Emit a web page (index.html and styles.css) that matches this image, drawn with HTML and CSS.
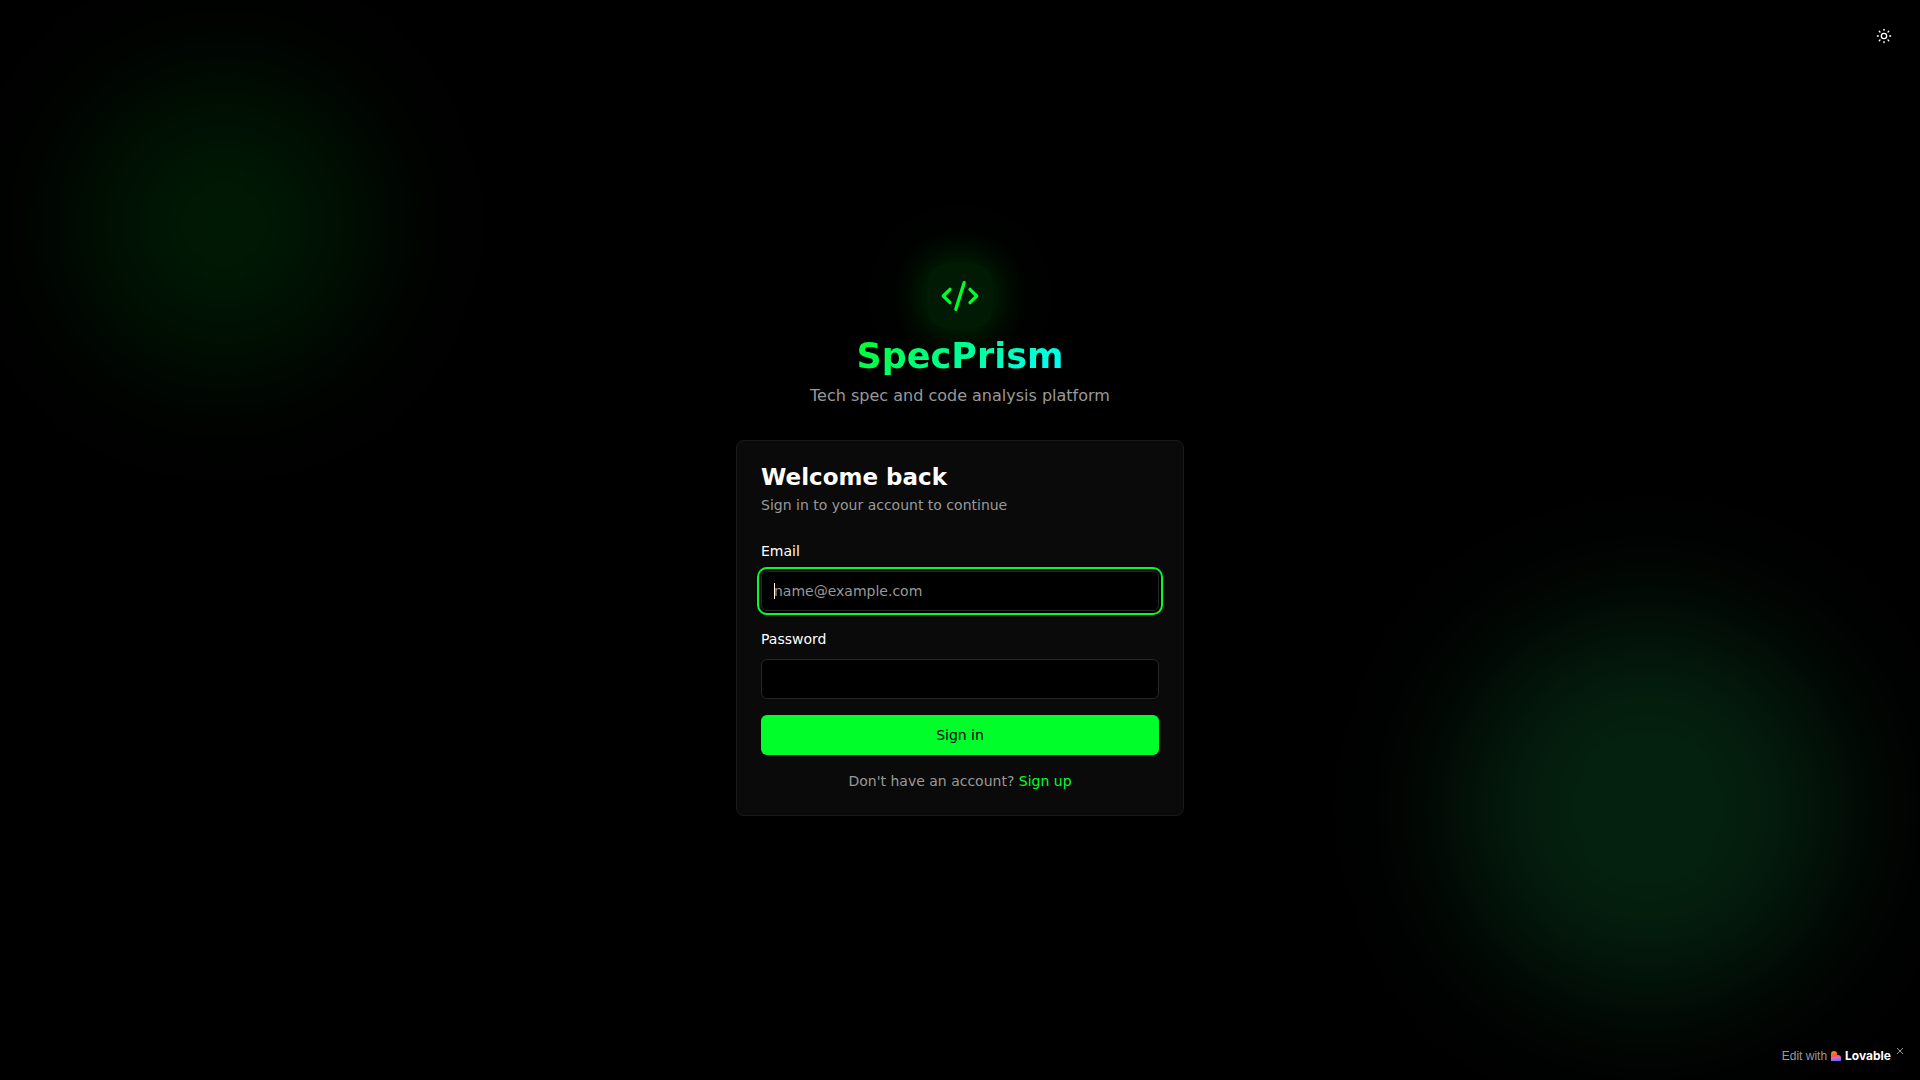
FILE: index.html
```
<!DOCTYPE html>
<html lang="en">
<head>
<meta charset="utf-8">
<meta name="viewport" content="width=device-width, initial-scale=1">
<title>SpecPrism</title>
<link rel="stylesheet" href="styles.css">
</head>
<body>
<div class="glow glow-left"></div>
<div class="glow glow-right"></div>

<button class="theme-toggle" type="button" aria-label="Toggle theme">
  <svg width="16" height="16" viewBox="0 0 24 24" fill="none" stroke="currentColor" stroke-width="2" stroke-linecap="round" stroke-linejoin="round">
    <circle cx="12" cy="12" r="4"/>
    <path d="M12 2v1.500"/>
    <path d="M12 20.500v1.500"/>
    <path d="m4.930 4.930 1 1"/>
    <path d="m18.070 18.070 1 1"/>
    <path d="M2 12h1.500"/>
    <path d="M20.500 12h1.500"/>
    <path d="m5.930 18.070-1 1"/>
    <path d="m19.070 4.930-1 1"/>
  </svg>
</button>

<main class="login">
  <header class="brand">
    <div class="brand-icon">
      <svg width="40" height="40" viewBox="0 0 24 24" fill="none" stroke="currentColor" stroke-width="2" stroke-linecap="round" stroke-linejoin="round">
        <path d="m18 16 4-4-4-4"/>
        <path d="m6 8-4 4 4 4"/>
        <path d="m14.5 4-5 16"/>
      </svg>
    </div>
    <h1>SpecPrism</h1>
    <p>Tech spec and code analysis platform</p>
  </header>

  <section class="card">
    <h2>Welcome back</h2>
    <p class="card-text">Sign in to your account to continue</p>
    <form class="form">
      <div class="field">
        <label for="email">Email</label>
        <div class="input-wrap">
          <input id="email" type="email" placeholder="name@example.com" autofocus>
          <span class="caret"></span>
        </div>
      </div>
      <div class="field">
        <label for="password">Password</label>
        <input id="password" type="password">
      </div>
      <button class="submit" type="submit">Sign in</button>
      <p class="signup">Don't have an account? <a href="#">Sign up</a></p>
    </form>
  </section>
</main>

<div class="badge">
  <a class="badge-link" href="#">
    <span>Edit with</span>
    <svg width="10" height="10" viewBox="0 0 10 10">
      <defs>
        <linearGradient id="heart" x1="0.3" y1="0" x2="0.5" y2="1">
          <stop offset="0.2" stop-color="#ff7a18"/>
          <stop offset="0.45" stop-color="#ff5a3c"/>
          <stop offset="0.7" stop-color="#e661c8"/>
          <stop offset="1" stop-color="#4f73ff"/>
        </linearGradient>
      </defs>
      <path fill="url(#heart)" d="M3 0a3 3 0 0 1 3 3v1h1a3 3 0 0 1 3 3v3H0V3a3 3 0 0 1 3-3z"/>
    </svg>
    <strong>Lovable</strong>
  </a>
  <button class="badge-close" type="button" aria-label="Close">
    <svg width="6" height="6" viewBox="0 0 6 6" stroke="currentColor" stroke-width="1"><path d="M0 0l6 6M6 0L0 6"/></svg>
  </button>
</div>
<script>
  document.getElementById("email").focus();
</script>
</body>
</html>
```
FILE: styles.css
```
* {
  box-sizing: border-box;
}
body {
  margin: 0;
  min-height: 100vh;
  background: #000;
  color: #fff;
  font-family: "DejaVu Sans", sans-serif;
  font-size: 16px;
  line-height: 24px;
  position: relative;
  overflow: hidden;
}
h1, h2, p {
  margin: 0;
}
button {
  font-family: inherit;
  border: 0;
  cursor: pointer;
}

/* blurred background circles */
.glow {
  position: absolute;
  border-radius: 50%;
  filter: blur(64px);
}
.glow-left {
  top: 80px;
  left: 80px;
  width: 288px;
  height: 288px;
  background: rgba(0, 255, 42, 0.1);
}
.glow-right {
  right: 80px;
  bottom: 80px;
  width: 384px;
  height: 384px;
  background: rgba(27, 224, 104, 0.15);
}

.theme-toggle {
  position: absolute;
  top: 16px;
  right: 16px;
  width: 40px;
  height: 40px;
  padding: 0;
  display: flex;
  align-items: center;
  justify-content: center;
  background: none;
  color: #fff;
}

.login {
  position: relative;
  min-height: 100vh;
  width: 100%;
  max-width: 448px;
  margin: 0 auto;
  display: flex;
  flex-direction: column;
  justify-content: center;
  gap: 32px;
}

.brand {
  display: flex;
  flex-direction: column;
  align-items: center;
  gap: 8px;
  text-align: center;
}
.brand-icon {
  padding: 12px;
  height: 64px;
  border-radius: 16px;
  color: #00ff2a;
  background: rgba(0, 255, 42, 0.1);
  box-shadow: 0 0 40px rgba(0, 255, 42, 0.2), 0 0 80px rgba(0, 255, 42, 0.1);
}
.brand h1 {
  font-size: 35px;
  line-height: 40px;
  font-weight: 700;
  color: transparent;
  background: linear-gradient(135deg, #00ff2a, #00ffff);
  background-clip: text;
  -webkit-background-clip: text;
}
.brand p {
  color: #999;
}

.card {
  padding: 24px;
  border: 1px solid #1a1a1a;
  border-radius: 8px;
  background: #0a0a0a;
}
.card h2 {
  font-size: 23px;
  line-height: 24px;
  font-weight: 700;
}
.card-text {
  margin-top: 6px;
  font-size: 14px;
  line-height: 20px;
  color: #999;
}

.form {
  margin-top: 24px;
  display: flex;
  flex-direction: column;
  gap: 16px;
}
.field {
  display: flex;
  flex-direction: column;
  gap: 8px;
}
.field label {
  font-size: 14px;
  line-height: 24px;
}
.field input {
  display: block;
  width: 100%;
  height: 40px;
  padding: 8px 12px;
  border: 1px solid #262626;
  border-radius: 6px;
  background: #000;
  color: #fff;
  font-family: inherit;
  font-size: 14px;
  line-height: 20px;
}
.field input::placeholder {
  color: #999;
}
.field input:focus {
  outline: none;
  box-shadow: 0 0 0 2px #000, 0 0 0 4px #00ff2a;
}
.input-wrap {
  position: relative;
}
/* steady caret while the field is empty */
.caret {
  display: none;
  position: absolute;
  top: 12px;
  left: 13px;
  width: 1px;
  height: 16px;
  background: #fff;
}
input:focus:placeholder-shown {
  caret-color: transparent;
}
input:focus:placeholder-shown + .caret {
  display: block;
}
.submit {
  height: 40px;
  border-radius: 6px;
  background: #00ff2a;
  color: #000;
  font-size: 14px;
  line-height: 20px;
}
.signup {
  font-size: 14px;
  line-height: 20px;
  text-align: center;
  color: #999;
}
.signup a {
  color: #00ff2a;
  text-decoration: none;
}

.badge {
  position: absolute;
  right: 11px;
  bottom: 12px;
  display: flex;
  align-items: flex-start;
  gap: 4px;
  padding: 4px;
  background: #000;
  border-radius: 4px;
  font-family: "Liberation Sans", sans-serif;
}
.badge-link {
  display: flex;
  align-items: center;
  gap: 4px;
  font-size: 12px;
  line-height: 16px;
  color: #999;
  text-decoration: none;
}
.badge-link strong {
  font-family: Inter, sans-serif;
  color: #fff;
}
.badge-close {
  width: 10px;
  height: 6px;
  padding: 0;
  display: flex;
  justify-content: center;
  background: none;
  color: #999;
}
```
